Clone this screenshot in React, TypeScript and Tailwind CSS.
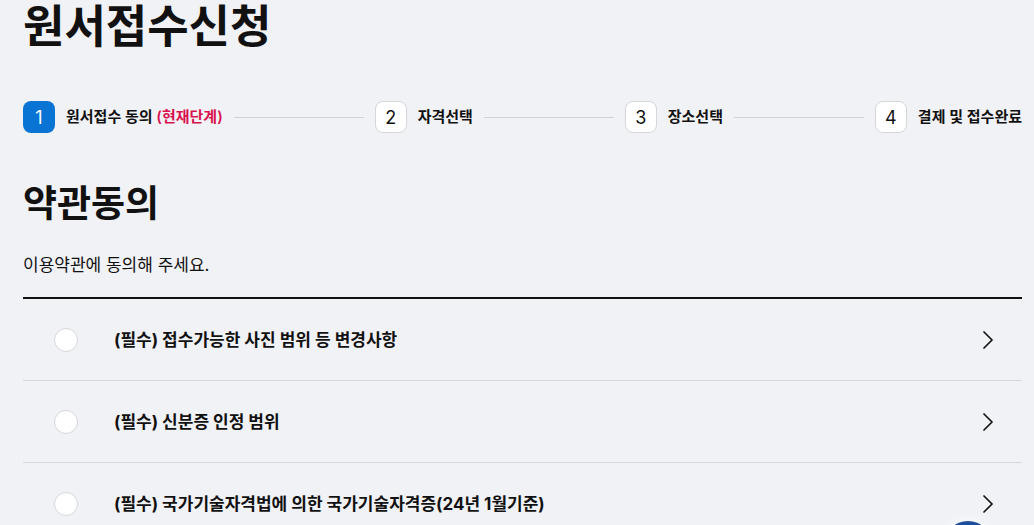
import React from 'react';

type Step = {
    no: number
    label: string
    current?: boolean
}

const steps: Step[] = [
    { no: 1, label: '원서접수 동의', current: true },
    { no: 2, label: '자격선택' },
    { no: 3, label: '장소선택' },
    { no: 4, label: '결제 및 접수완료' },
]

const terms = [
    '(필수) 접수가능한 사진 범위 등 변경사항',
    '(필수) 신분증 인정 범위',
    '(필수) 국가기술자격법에 의한 국가기술자격증(24년 1월기준)',
]

const Chevron = () => (
    <svg width="12" height="20" viewBox="0 0 12 20" fill="none">
        <polyline points="1.5,1.5 10,10 1.5,18.5" stroke="#111" strokeWidth="1.6" strokeLinejoin="miter" />
    </svg>
)

const StepBar = () => (
    <div className='flex items-center gap-[11px] h-8'>
        {steps.map((step, index) => (
            <React.Fragment key={step.no}>
                <div
                    className={step.current
                        ? 'w-8 h-8 shrink-0 rounded-lg bg-[#0a74d4] text-white flex items-center justify-center text-[18px]'
                        : 'w-8 h-8 shrink-0 rounded-lg bg-white border border-[#d4d6da] text-[#111] flex items-center justify-center text-[18px]'}
                >
                    {step.no}
                </div>
                <p className='shrink-0 text-[15px] font-semibold text-[#111] leading-5'>
                    {step.label}
                    {step.current && <span className='text-[#d9124f]'> (현재단계)</span>}
                </p>
                {/* 단계 사이 선 */}
                {index < steps.length - 1 && <div className='flex-1 h-px bg-[#cfd2d7]' />}
            </React.Fragment>
        ))}
    </div>
)

export default function App() {
    return (
        <div
            className='relative h-screen overflow-hidden bg-[#f1f2f6] text-[#111]'
            style={{ fontFamily: 'Inter, "Noto Sans CJK KR", sans-serif' }}
        >
            <div className='w-[999px] ml-[23px]'>
                <h1 className='text-[45px] font-bold leading-[54px]'>원서접수신청</h1>
                <div className='mt-[47px]'>
                    <StepBar />
                </div>
                <h2 className='mt-[49px] text-[37px] font-bold leading-[44px]'>약관동의</h2>
                <p className='mt-[27px] text-[17px] leading-6'>이용약관에 동의해 주세요.</p>
                <div className='mt-5 border-t-2 border-[#111]'>
                    {terms.map(term => (
                        <div key={term} className='h-[82px] border-b border-[#d4d6da] flex items-center'>
                            <span className='ml-[31px] w-6 h-6 rounded-full bg-white border border-[#d4d6da] shrink-0' />
                            <p className='ml-[36px] flex-1 text-[17px] font-bold leading-6'>{term}</p>
                            <span className='mr-[28px] flex items-center'><Chevron /></span>
                        </div>
                    ))}
                </div>
            </div>
            {/* 플로팅 버튼 */}
            <div className='absolute top-[521px] left-[944px] w-12 h-12 rounded-full bg-[#1d4f9c] shadow-[0_0_14px_rgba(255,255,255,0.9)]' />
        </div>
    );
}
